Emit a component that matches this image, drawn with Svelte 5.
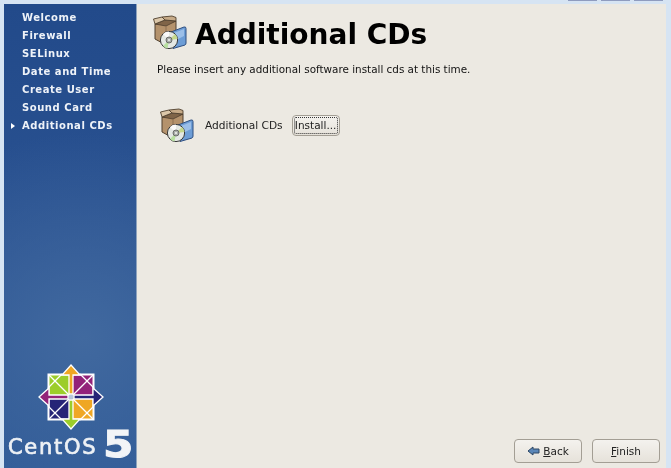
<script lang="ts">
  const steps = ['Welcome', 'Firewall', 'SELinux', 'Date and Time', 'Create User', 'Sound Card', 'Additional CDs'];
  const current = 'Additional CDs';
  // arrow colour per direction, drawn once and rotated round the logo centre
  const arrows = [
    { rot: 0, fill: '#efa724' },
    { rot: 90, fill: '#262577' },
    { rot: 180, fill: '#9ccd2a' },
    { rot: 270, fill: '#932279' },
  ];
  const quads = [
    { rot: 0, fill: '#9ccd2a' },
    { rot: 90, fill: '#932279' },
    { rot: 180, fill: '#efa724' },
    { rot: 270, fill: '#262577' },
  ];
</script>

{#snippet cdIcon()}
  <svg class="cd-icon" width="34" height="34" viewBox="0 0 34 34">
    <path d="M2 9 L2 24 L13 30 L23 26 L23 6 L13 9 Z" fill="#b4926c" stroke="#4f3f2e" stroke-width="1" />
    <path d="M2 9 L13 11 L23 6 L12 5 Z" fill="#7f6448" stroke="#4f3f2e" stroke-width=".8" />
    <path d="M2 9 L0.500 4 L9 2 L12 5 Z" fill="#dcc7a9" stroke="#4f3f2e" stroke-width=".9" />
    <path d="M12 5 L9 2 L19 1 L23 2.500 L23 6 Z" fill="#c7ab88" stroke="#4f3f2e" stroke-width=".9" />
    <path d="M13 11 L13 29" stroke="#8d7153" stroke-width="1" />
    <path d="M18 17 L31 12 Q33 11.500 33 13.500 L33 28 Q33 29.500 32 30 L20 33.500 Z" fill="#6d9dd6" stroke="#2f4f80" stroke-width="1" />
    <path d="M21 18 L31 14 L31 21 L21 26 Z" fill="#9cbfe8" />
    <circle cx="16" cy="25" r="8.600" fill="#e4e8e4" stroke="#3a3a3a" stroke-width="1" />
    <path d="M16 25 L22 18.900 A8.600 8.600 0 0 1 24.500 24 Z" fill="#c5d88c" />
    <path d="M16 25 L10 31 A8.600 8.600 0 0 0 14.500 33.500 Z" fill="#b8e0a0" />
    <path d="M16 25 L10 18.900 A8.600 8.600 0 0 1 16 16.500 Z" fill="#fafafa" />
    <circle cx="16" cy="25" r="3" fill="#a9aea9" stroke="#555" stroke-width=".8" />
    <circle cx="16" cy="25" r="1.100" fill="#eee" />
  </svg>
{/snippet}

<div class="screen">
  <div class="titlebar">
    <span class="tab"></span>
    <span class="tab"></span>
    <span class="tab"></span>
  </div>
  <div class="window">
    <aside class="sidebar">
      <ul class="steps">
        {#each steps as s}
          <li class:on={s === current}>{s}</li>
        {/each}
      </ul>
      <div class="brand">
        <svg class="mark" width="68" height="68" viewBox="-34 -34 68 68">
          {#each quads as q}
            <g transform="rotate({q.rot})">
              <rect x="-22.500" y="-22.500" width="22" height="22" fill={q.fill} stroke="#fff" stroke-width="2" />
              <path d="M-22 -22 L0 0" stroke="#fff" stroke-width="1.300" />
              <path d="M-9 -23 L-23 -9" stroke="#fff" stroke-width="1.300" />
            </g>
          {/each}
          {#each arrows as a}
            <g transform="rotate({a.rot})">
              <path d="M0 -32 L9 -22 L2 -22 L2 -3 L-2 -3 L-2 -22 L-9 -22 Z" fill={a.fill} stroke="#fff" stroke-width="1.300" />
            </g>
          {/each}
          <circle r="2.500" fill="#b9c7dc" />
        </svg>
        <div class="wordmark"><span class="name">CentOS</span><span class="ver">5</span></div>
      </div>
    </aside>
    <main class="panel">
      <header class="head">
        {@render cdIcon()}
        <h1>Additional CDs</h1>
      </header>
      <p class="intro">Please insert any additional software install cds at this time.</p>
      <div class="row">
        {@render cdIcon()}
        <span class="label">Additional CDs</span>
        <button class="btn install">Install...</button>
      </div>
      <footer class="actions">
        <button class="btn nav">
          <svg width="13" height="10" viewBox="0 0 13 10">
            <path d="M1 5 L6 1 L6 3 L12 3 L12 7 L6 7 L6 9 Z" fill="#5a86b8" stroke="#2c4664" stroke-width="1" />
          </svg>
          <span><u>B</u>ack</span>
        </button>
        <button class="btn nav"><span><u>F</u>inish</span></button>
      </footer>
    </main>
  </div>
</div>

<style>
  :global(body) {
    margin: 0;
    background: #d6e4f3;
  }
  .screen {
    width: 671px;
    height: 468px;
    overflow: hidden;
    display: flex;
    flex-direction: column;
    background: #d6e4f3;
    font-family: "DejaVu Sans", sans-serif;
  }
  .titlebar {
    height: 4px;
    flex: none;
    display: flex;
    justify-content: flex-end;
    gap: 4px;
    padding-right: 8px;
  }
  .tab {
    width: 29px;
    height: 1px;
    background: #8f9cbf;
  }
  .window {
    flex: 1;
    display: flex;
    margin: 0 5px 0 4px;
    min-height: 0;
    filter: blur(.35px);
  }
  .sidebar {
    width: 132px;
    flex: none;
    display: flex;
    flex-direction: column;
    justify-content: space-between;
    border-right: 1px solid #8ea3bd;
    background:
      radial-gradient(circle at 60% 72%, #41699f 0, rgba(65, 105, 159, 0) 60%),
      linear-gradient(180deg, #224a8a 0, #2b5392 55%, #2f5a97 100%);
  }
  .steps {
    list-style: none;
    margin: 0;
    padding: 5px 0 0 18px;
  }
  .steps li {
    position: relative;
    height: 18px;
    line-height: 18px;
    font-size: 10px;
    font-weight: 700;
    letter-spacing: .55px;
    color: #eef2f8;
    white-space: nowrap;
  }
  .steps li.on::before {
    content: '';
    position: absolute;
    left: -11px;
    top: 6px;
    border-left: 4px solid #fff;
    border-top: 3px solid transparent;
    border-bottom: 3px solid transparent;
  }
  .brand {
    display: flex;
    flex-direction: column;
    align-items: flex-start;
    padding: 0 0 8px 4px;
  }
  .mark {
    margin-left: 29px;
  }
  .wordmark {
    display: flex;
    align-items: flex-end;
    gap: 6px;
    height: 32px;
    margin-top: -3px;
    color: #eef1f5;
  }
  .name {
    font-size: 21px;
    line-height: 26px;
    letter-spacing: 1.700px;
    -webkit-text-stroke: .7px #eef1f5;
  }
  .ver {
    font-size: 38px;
    line-height: 32px;
    font-weight: 700;
    color: #f2f4f7;
    -webkit-text-stroke: 1px #f2f4f7;
    transform: scaleX(1.150);
    transform-origin: left bottom;
  }
  .panel {
    flex: 1;
    min-width: 0;
    display: flex;
    flex-direction: column;
    background: #ece9e2;
    padding: 8px 6px 5px 15px;
    color: #000;
  }
  .head {
    display: flex;
    align-items: center;
    gap: 8px;
    height: 44px;
  }
  .cd-icon {
    flex: none;
  }
  .head .cd-icon {
    margin: 0 0 4px 1px;
  }
  h1 {
    margin: 0;
    font-size: 28px;
    font-weight: 700;
    color: #000;
  }
  .intro {
    margin: 7px 0 0 5px;
    font-size: 10.400px;
    line-height: 12px;
    white-space: nowrap;
    color: #111;
  }
  .row {
    display: flex;
    align-items: center;
    margin: 32px 0 0 8px;
    height: 36px;
  }
  .label {
    margin-left: 11px;
    font-size: 10.600px;
    color: #222;
  }
  .btn {
    font-family: inherit;
    color: #222;
    background: linear-gradient(180deg, #f4f2ee, #e6e2da);
    border: 1px solid #a39e94;
    border-radius: 4px;
    padding: 0;
  }
  .install {
    margin-left: 9px;
    width: 48px;
    height: 21px;
    font-size: 10.500px;
    outline: 1px dotted #333;
    outline-offset: -3px;
  }
  .actions {
    margin-top: auto;
    display: flex;
    justify-content: flex-end;
    gap: 10px;
  }
  .nav {
    width: 68px;
    height: 24px;
    font-size: 10.500px;
    display: flex;
    align-items: center;
    justify-content: center;
    gap: 3px;
  }
</style>
